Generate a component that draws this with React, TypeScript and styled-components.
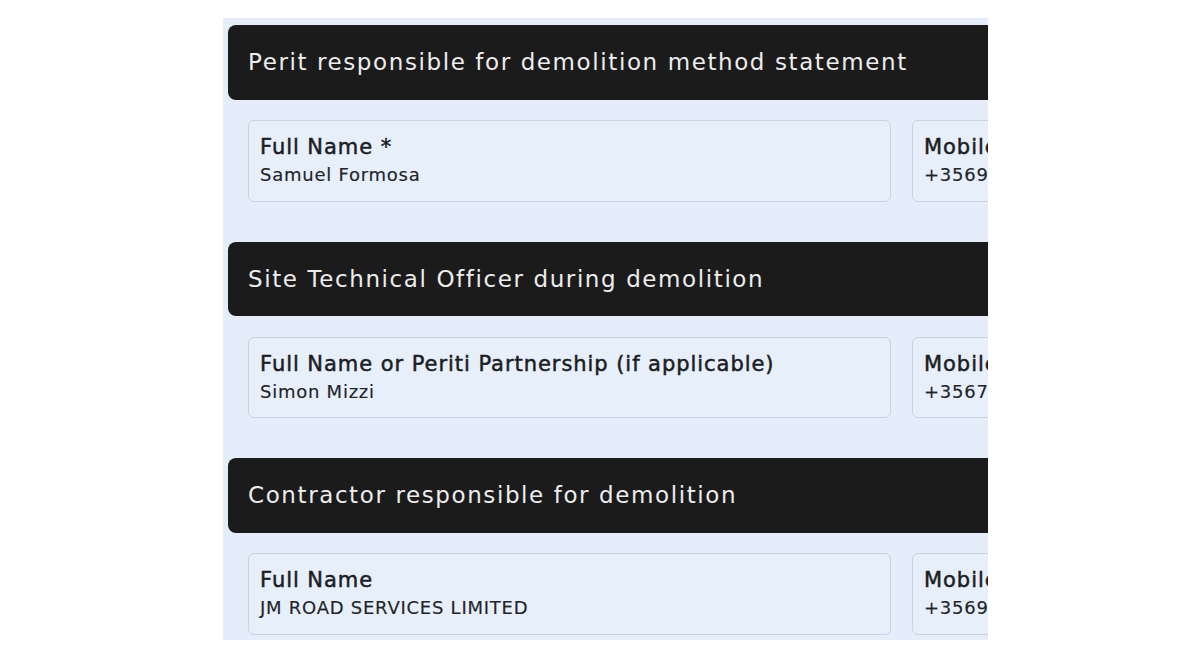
import { FC } from 'react';
import styled, { createGlobalStyle } from 'styled-components';

const GlobalStyle = createGlobalStyle`
  html, body {
    margin: 0;
    background: #ffffff;
  }
  body {
    font-family: 'DejaVu Sans', 'Noto Sans', sans-serif;
    color: #1f2126;
  }
`;

const Panel = styled.div`
  margin: 18px 0 0 223px;
  width: 765px;
  height: 622px;
  padding: 7px 0 0 5px;
  box-sizing: border-box;
  background: #e5edfa;
  overflow: hidden;
  display: flex;
  flex-direction: column;
`;

const Section = styled.section`
  display: flex;
  flex-direction: column;
  gap: 20.5px;

  & + & {
    margin-top: 40px;
  }
`;

const SectionHeader = styled.h2`
  margin: 0;
  width: 820px;
  height: 74.5px;
  flex-shrink: 0;
  box-sizing: border-box;
  display: flex;
  align-items: center;
  padding-left: 20px;
  background: #1b1b1c;
  border-radius: 8px;
  color: #ededed;
  font-size: 23px;
  font-weight: 400;
  letter-spacing: 1.6px;
`;

const FieldRow = styled.div`
  display: flex;
  gap: 21px;
  padding-left: 20px;
`;

const Field = styled.div<{ $width: number }>`
  flex: 0 0 ${(p) => p.$width}px;
  height: 81.5px;
  box-sizing: border-box;
  padding: 14px 11px 0;
  border: 1px solid #c9d2de;
  border-radius: 6px;
  background: #e7effb;
  display: flex;
  flex-direction: column;
  gap: 4px;
  overflow: hidden;
`;

const Label = styled.div`
  font-size: 21px;
  font-weight: 400;
  line-height: 25px;
  letter-spacing: 0.95px;
  color: #1b1d22;
  white-space: nowrap;
  -webkit-text-stroke: 0.5px #1b1d22;
`;

const Value = styled.div`
  font-size: 18px;
  line-height: 22px;
  letter-spacing: 0.75px;
  color: #222428;
  white-space: nowrap;
  -webkit-text-stroke: 0.15px #222428;
`;

type Person = {
  title: string;
  nameLabel: string;
  name: string;
  mobile: string;
};

const people: Person[] = [
  {
    title: 'Perit responsible for demolition method statement',
    nameLabel: 'Full Name *',
    name: 'Samuel Formosa',
    mobile: '+35699000000',
  },
  {
    title: 'Site Technical Officer during demolition',
    nameLabel: 'Full Name or Periti Partnership (if applicable)',
    name: 'Simon Mizzi',
    mobile: '+35679000000',
  },
  {
    title: 'Contractor responsible for demolition',
    nameLabel: 'Full Name',
    name: 'JM ROAD SERVICES LIMITED',
    mobile: '+35699000000',
  },
];

const PersonSection: FC<{ person: Person }> = ({ person }) => (
  <Section>
    <SectionHeader>{person.title}</SectionHeader>
    <FieldRow>
      <Field $width={643}>
        <Label>{person.nameLabel}</Label>
        <Value>{person.name}</Value>
      </Field>
      <Field $width={240}>
        <Label>Mobile Number</Label>
        <Value>{person.mobile}</Value>
      </Field>
    </FieldRow>
  </Section>
);

export default function App() {
  return (
    <>
      <GlobalStyle />
      <Panel>
        {people.map((p) => (
          <PersonSection key={p.title} person={p} />
        ))}
      </Panel>
    </>
  );
}
